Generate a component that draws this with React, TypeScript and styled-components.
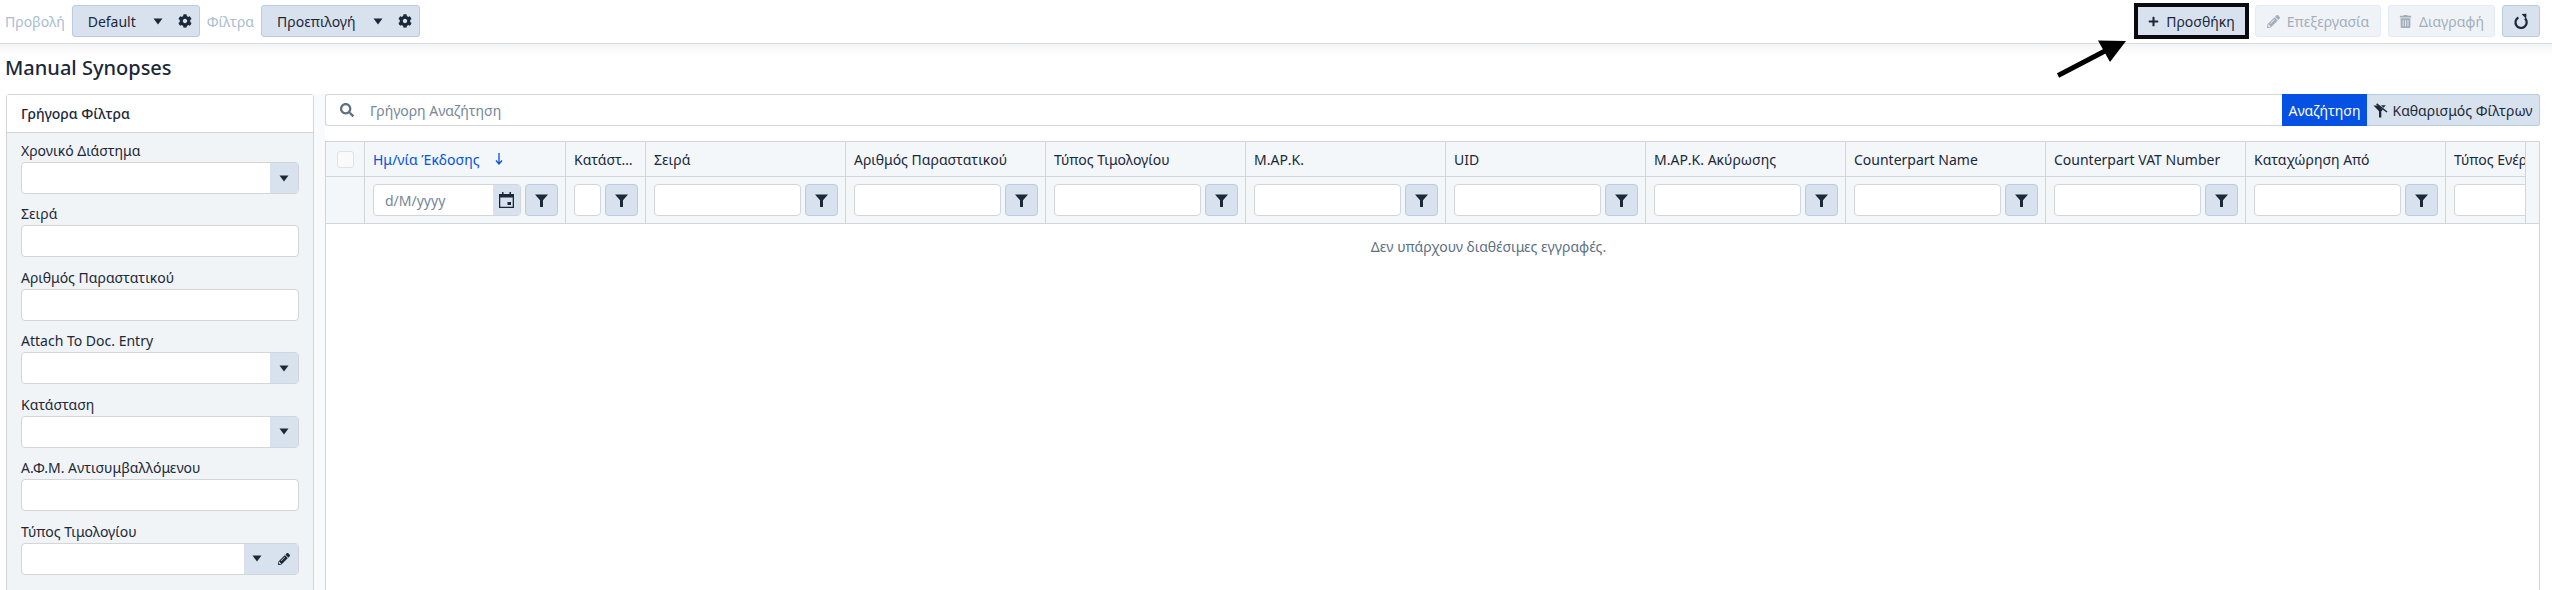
import React from 'react';
import styled, { createGlobalStyle } from 'styled-components';
import { FaCog, FaPencilAlt, FaPlus, FaSearch, FaTrashAlt } from 'react-icons/fa';

const GlobalStyle = createGlobalStyle`
  html, body {
    margin: 0;
    padding: 0;
    height: 590px;
    overflow: hidden;
    background: #fff;
    font-family: "Noto Sans", "Open Sans", sans-serif;
    color: #1b2838;
  }
  * { box-sizing: border-box; }
`;

const columns = [
  'Σειρά',
  'Αριθμός Παραστατικού',
  'Τύπος Τιμολογίου',
  'Μ.ΑΡ.Κ.',
  'UID',
  'Μ.ΑΡ.Κ. Ακύρωσης',
  'Counterpart Name',
  'Counterpart VAT Number',
  'Καταχώρηση Από',
  'Τύπος Ενέργειας',
];

const Caret = () => (
  <CaretSvg viewBox="0 0 10 7">
    <path d="M0.5 0.5h9L5 6.5z" fill="currentColor" />
  </CaretSvg>
);

const FunnelIcon = () => (
  <svg width="13" height="13" viewBox="0 0 13 13">
    <path d="M0 0.5h13L8 6.2V13H5V6.2z" fill="#1b2838" />
  </svg>
);

const CalendarIcon = () => (
  <svg width="15" height="16" viewBox="0 0 15 16">
    <path d="M3 0h1.5v2h6V0H12v2h3v14H0V2h3zM1.3 5.5v9.2h12.4V5.5zM8.5 10H12v3H8.5z" fill="#1b2838" fillRule="evenodd" />
  </svg>
);

const ClearFilterIcon = () => (
  <svg width="15" height="15" viewBox="0 0 15 15">
    <path d="M0.5 2.5h5.2l4.2 4.2-1.6 1.6V14.5H6V8.2z" fill="#1b2838" />
    <path d="M3.6 0.8L14 9" stroke="#1b2838" strokeWidth="1.5" fill="none" />
    <path d="M8 2.2h4.8L10.6 4.8z" fill="#1b2838" />
  </svg>
);

const ReloadIcon = () => (
  <svg width="16" height="17" viewBox="0 0 16 17">
    <path d="M12 5.4A5.6 5.6 0 1 1 5.4 4.5" stroke="#1b2838" strokeWidth="2.2" fill="none" />
    <path d="M8.6 1L13.4 0.8L13.2 6z" fill="#1b2838" />
  </svg>
);

const SelectField = ({ label }: { label: string }) => (
  <Field>
    <FieldLabel>{label}</FieldLabel>
    <InputShell>
      <SideButton>
        <Caret />
      </SideButton>
    </InputShell>
  </Field>
);

const TextField = ({ label }: { label: string }) => (
  <Field>
    <FieldLabel>{label}</FieldLabel>
    <InputShell />
  </Field>
);

function App(): JSX.Element {
  return (
    <Page>
      <GlobalStyle />
      <Toolbar>
        <ToolGroup>
          <ToolLabel>Προβολή</ToolLabel>
          <Picker $width={128}>
            <PickerText>Default</PickerText>
            <Caret />
            <FaCog size={14} />
          </Picker>
          <ToolLabel>Φίλτρα</ToolLabel>
          <Picker $width={159}>
            <PickerText>Προεπιλογή</PickerText>
            <Caret />
            <FaCog size={14} />
          </Picker>
        </ToolGroup>
        <ToolGroup>
          <AddButton>
            <FaPlus size={11} />
            Προσθήκη
          </AddButton>
          <ActionButton $width={126} disabled>
            <FaPencilAlt size={13} />
            Επεξεργασία
          </ActionButton>
          <ActionButton $width={107} disabled>
            <FaTrashAlt size={13} />
            Διαγραφή
          </ActionButton>
          <RefreshButton>
            <ReloadIcon />
          </RefreshButton>
        </ToolGroup>
      </Toolbar>
      <ArrowMark viewBox="0 0 70 38" width="70" height="38">
        <path d="M1 35.5L48 11" stroke="#000" strokeWidth="5" fill="none" />
        <path d="M69 1L41 0.5L53 22z" fill="#000" />
      </ArrowMark>

      <PageTitle>Manual Synopses</PageTitle>

      <Content>
        <Sidebar>
          <SidebarHeader>Γρήγορα Φίλτρα</SidebarHeader>
          <SidebarBody>
            <SelectField label="Χρονικό Διάστημα" />
            <TextField label="Σειρά" />
            <TextField label="Αριθμός Παραστατικού" />
            <SelectField label="Attach To Doc. Entry" />
            <SelectField label="Κατάσταση" />
            <TextField label="Α.Φ.Μ. Αντισυμβαλλόμενου" />
            <Field>
              <FieldLabel>Τύπος Τιμολογίου</FieldLabel>
              <InputShell>
                <SideButton $wide>
                  <Caret />
                  <FaPencilAlt size={12} />
                </SideButton>
              </InputShell>
            </Field>
          </SidebarBody>
        </Sidebar>

        <Main>
          <SearchBar>
            <SearchInput>
              <FaSearch size={14} color="#5d6f82" />
              <SearchHint>Γρήγορη Αναζήτηση</SearchHint>
            </SearchInput>
            <SearchButton>Αναζήτηση</SearchButton>
            <ClearButton>
              <ClearFilterIcon />
              Καθαρισμός Φίλτρων
            </ClearButton>
          </SearchBar>

          <Grid>
            <GridHead>
              <HeadRow>
                <CheckCell>
                  <CheckBox />
                </CheckCell>
                <HeadCell $width={201} $active>
                  Ημ/νία Έκδοσης
                  <SortArrow viewBox="0 0 8 12" width="8" height="12">
                    <path d="M4 0v10M1 7.5L4 11l3-3.5" stroke="#0551e3" strokeWidth="1.3" fill="none" />
                  </SortArrow>
                </HeadCell>
                <HeadCell $width={80}>
                  <Ellipsis>Κατάσταση</Ellipsis>
                </HeadCell>
                {columns.map((title) => (
                  <HeadCell key={title} $width={200}>
                    {title}
                  </HeadCell>
                ))}
              </HeadRow>
              <FilterRow>
                <CheckCell />
                <FilterCell $width={201}>
                  <DateInput>
                    <DateHint>d/M/yyyy</DateHint>
                    <DateButton>
                      <CalendarIcon />
                    </DateButton>
                  </DateInput>
                  <FilterButton>
                    <FunnelIcon />
                  </FilterButton>
                </FilterCell>
                <FilterCell $width={80}>
                  <FilterInput />
                  <FilterButton>
                    <FunnelIcon />
                  </FilterButton>
                </FilterCell>
                {columns.map((title) => (
                  <FilterCell key={title} $width={200}>
                    <FilterInput />
                    <FilterButton>
                      <FunnelIcon />
                    </FilterButton>
                  </FilterCell>
                ))}
              </FilterRow>
              <ScrollGutter />
            </GridHead>
            <EmptyRow>Δεν υπάρχουν διαθέσιμες εγγραφές.</EmptyRow>
          </Grid>
        </Main>
      </Content>
    </Page>
  );
}

const Page = styled.div`
  position: relative;
  height: 590px;
  overflow: hidden;
`;

const CaretSvg = styled.svg`
  width: 10px;
  height: 7px;
  flex: none;
`;

const Toolbar = styled.div`
  display: flex;
  justify-content: space-between;
  align-items: center;
  height: 44px;
  padding: 0 12px 1px 5px;
  border-bottom: 1px solid #d6d8da;
`;

const ToolGroup = styled.div`
  display: flex;
  align-items: center;
  gap: 7px;
`;

const ToolLabel = styled.span`
  font-size: 14px;
  color: #a9bcd2;
`;

const Picker = styled.div<{ $width: number }>`
  display: flex;
  align-items: center;
  width: ${({ $width }) => $width}px;
  height: 32px;
  padding: 0 7px 0 15px;
  gap: 15px;
  font-size: 14px;
  background: #d8e2ef;
  border: 1px solid #b7cbe3;
  border-radius: 3px;
  color: #1b2838;
`;

const PickerText = styled.span`
  flex: 1;
`;

const AddButton = styled.button`
  display: flex;
  align-items: center;
  justify-content: center;
  gap: 7px;
  width: 107px;
  height: 28px;
  margin-right: 3px;
  padding: 0;
  font: inherit;
  font-size: 14px;
  color: #1b2838;
  background: #d8e2ef;
  border: none;
  outline: 4px solid #0a0a0a;
`;

const ActionButton = styled.button<{ $width: number }>`
  display: flex;
  align-items: center;
  justify-content: center;
  gap: 7px;
  width: ${({ $width }) => $width}px;
  height: 32px;
  padding: 0;
  font: inherit;
  font-size: 14px;
  color: #a3aeba;
  background: #eff3f8;
  border: 1px solid #e3ebf4;
  border-radius: 3px;
`;

const RefreshButton = styled.button`
  display: flex;
  align-items: center;
  justify-content: center;
  width: 38px;
  height: 32px;
  padding: 0;
  color: #1b2838;
  background: #d8e2ef;
  border: 1px solid #b7cbe3;
  border-radius: 3px;
`;

const ArrowMark = styled.svg`
  position: absolute;
  left: 2057px;
  top: 40px;
`;

const PageTitle = styled.h1`
  height: 50px;
  margin: 0;
  padding: 10px 0 0 5px;
  font-size: 20px;
  line-height: 28px;
  font-weight: 500;
  color: #1b2838;
  background: linear-gradient(#f4f5f6, #fff 12px);
`;

const Content = styled.div`
  display: flex;
  height: 496px;
  padding: 0 12px 0 6px;
  background: linear-gradient(90deg, #fff 314px, #f8fafc 314px, #f8fafc 325px, #fff 325px);
`;

const Sidebar = styled.aside`
  flex: none;
  width: 308px;
  height: 510px;
  background: #f1f4f6;
  border: 1px solid #d3d6d9;
  border-radius: 3px 3px 0 0;
`;

const SidebarHeader = styled.div`
  height: 38px;
  padding-left: 14px;
  font-size: 14px;
  font-weight: 500;
  line-height: 38px;
  background: #fff;
  border-bottom: 1px solid #d3d6d9;
`;

const SidebarBody = styled.div`
  display: flex;
  flex-direction: column;
  gap: 10.45px;
  padding: 8px 14px 0;
`;

const Field = styled.div`
  display: flex;
  flex-direction: column;
  gap: 1px;
`;

const FieldLabel = styled.label`
  height: 20px;
  font-size: 14px;
  line-height: 20px;
  color: #1b2838;
`;

const InputShell = styled.div`
  display: flex;
  justify-content: flex-end;
  height: 32px;
  overflow: hidden;
  background: #fff;
  border: 1px solid #d3d6d9;
  border-radius: 4px;
`;

const SideButton = styled.div<{ $wide?: boolean }>`
  display: flex;
  align-items: center;
  justify-content: space-around;
  width: ${({ $wide }) => ($wide ? '54px' : '28px')};
  color: #1b2838;
  background: #d8e2ef;
`;

const Main = styled.main`
  flex: none;
  width: 2215px;
  margin-left: 11px;
`;

const SearchBar = styled.div`
  display: flex;
  height: 32px;
`;

const SearchInput = styled.div`
  display: flex;
  flex: 1;
  align-items: center;
  gap: 16px;
  padding-left: 14px;
  background: #fff;
  border: 1px solid #d3d6d9;
  border-right: none;
  border-radius: 3px 0 0 3px;
`;

const SearchHint = styled.span`
  font-size: 14px;
  color: #76879a;
`;

const SearchButton = styled.button`
  width: 85px;
  padding: 0;
  font: inherit;
  font-size: 14px;
  color: #fff;
  background: #0551e3;
  border: none;
`;

const ClearButton = styled.button`
  display: flex;
  align-items: center;
  justify-content: center;
  gap: 4px;
  width: 173px;
  padding: 0;
  font: inherit;
  font-size: 14px;
  color: #1b2838;
  background: #d8e2ef;
  border: 1px solid #b7cbe3;
  border-left: none;
  border-radius: 0 3px 3px 0;
`;

const Grid = styled.div`
  height: 460px;
  margin-top: 15px;
  background: #fff;
  border: 1px solid #d3d6d9;
  border-bottom: none;
`;

const GridHead = styled.div`
  position: relative;
  height: 82px;
  overflow: hidden;
  background: #f3f7fa;
  border-bottom: 1px solid #d3d6d9;
`;

const HeadRow = styled.div`
  display: flex;
  height: 35px;
  border-bottom: 1px solid #d3d6d9;
`;

const FilterRow = styled.div`
  display: flex;
  height: 46px;
`;

const CheckCell = styled.div`
  display: flex;
  flex: none;
  align-items: center;
  justify-content: center;
  width: 39px;
  border-right: 1px solid #d3d6d9;
`;

const CheckBox = styled.span`
  width: 17px;
  height: 17px;
  background: #f8fafb;
  border: 1px solid #dfe3e6;
  border-radius: 3px;
`;

const HeadCell = styled.div<{ $width: number; $active?: boolean }>`
  display: flex;
  flex: none;
  align-items: center;
  width: ${({ $width }) => $width}px;
  padding: 0 8px;
  font-size: 14px;
  white-space: nowrap;
  color: ${({ $active }) => ($active ? '#0551e3' : '#1b2838')};
  border-right: 1px solid #d3d6d9;
`;

const Ellipsis = styled.span`
  overflow: hidden;
  text-overflow: ellipsis;
`;

const SortArrow = styled.svg`
  margin-left: 16px;
`;

const FilterCell = styled.div<{ $width: number }>`
  display: flex;
  flex: none;
  align-items: center;
  gap: 4px;
  width: ${({ $width }) => $width}px;
  padding: 0 7px 0 8px;
  border-right: 1px solid #d3d6d9;
`;

const FilterInput = styled.div`
  flex: 1;
  min-width: 0;
  height: 32px;
  background: #fff;
  border: 1px solid #d3d6d9;
  border-radius: 4px;
`;

const DateInput = styled(FilterInput)`
  display: flex;
  align-items: center;
  overflow: hidden;
`;

const DateHint = styled.span`
  flex: 1;
  padding-left: 11px;
  font-size: 14px;
  color: #76879a;
`;

const DateButton = styled.div`
  display: flex;
  align-items: center;
  justify-content: center;
  width: 27px;
  height: 100%;
  background: #d8e2ef;
`;

const FilterButton = styled.div`
  display: flex;
  flex: none;
  align-items: center;
  justify-content: center;
  width: 33px;
  height: 32px;
  background: #d8e2ef;
  border: 1px solid #b7cbe3;
  border-radius: 4px;
`;

const ScrollGutter = styled.div`
  position: absolute;
  top: 0;
  right: 0;
  bottom: 0;
  width: 14px;
  background: #f3f7fa;
  border-left: 1px solid #d3d6d9;
`;

const EmptyRow = styled.div`
  padding: 13px 0 0 112px;
  font-size: 14px;
  line-height: 20px;
  text-align: center;
  color: #5d6f82;
`;

export default App;
